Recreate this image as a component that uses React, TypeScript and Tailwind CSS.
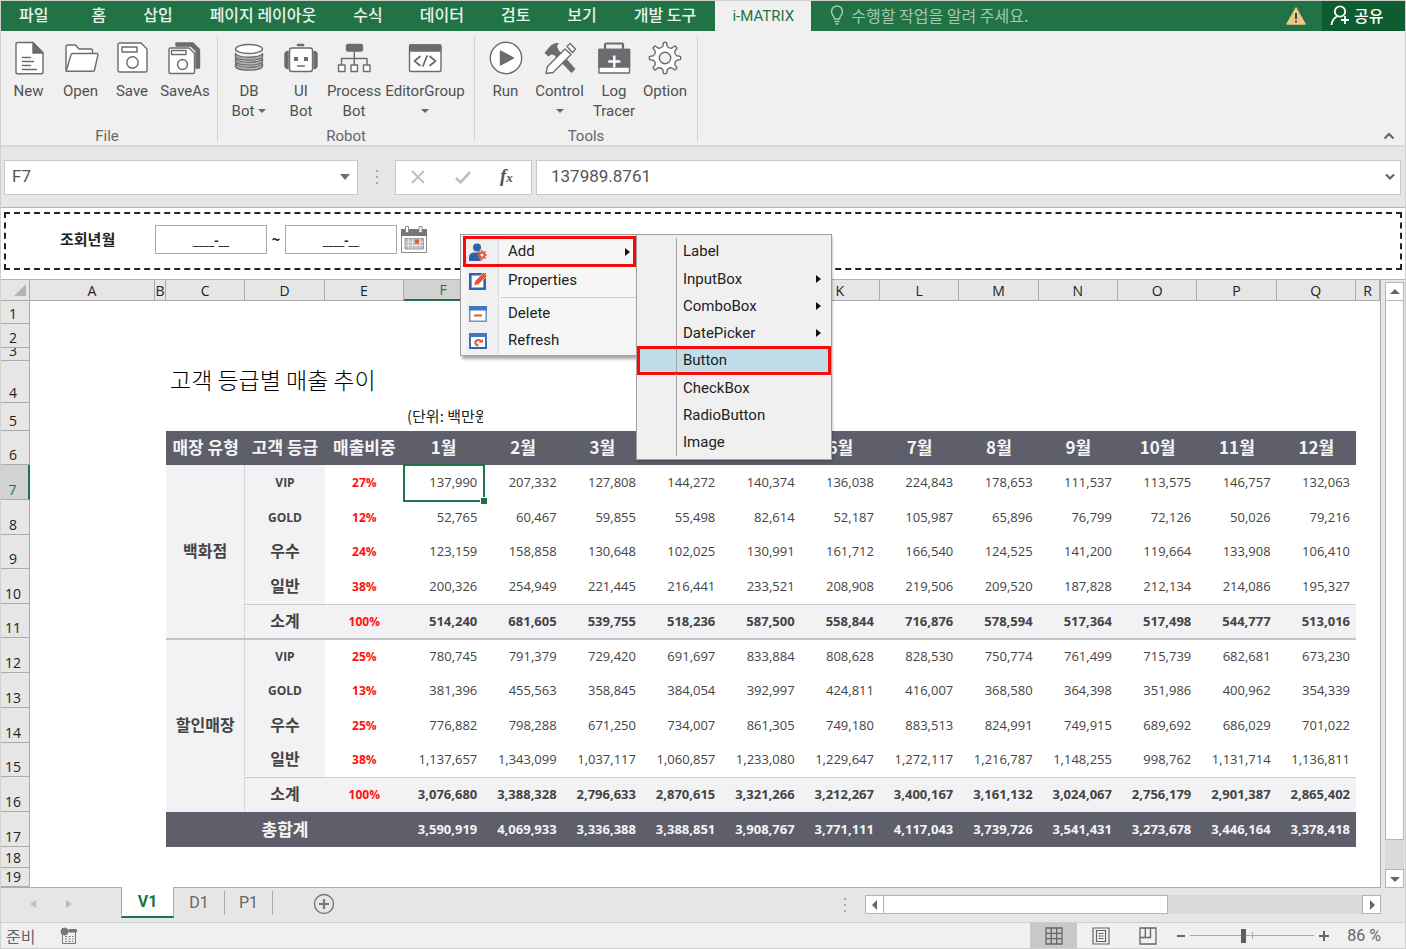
import type { ReactNode } from "react";
import clsx from "clsx";

const INK = "#6b6b70";

function Glyph({ children }: { children: ReactNode }) {
  return (
    <svg
      aria-hidden="true"
      className="h-9 w-9 shrink-0"
      viewBox="0 0 36 36"
      fill="#fff"
      stroke={INK}
      strokeWidth="1.4"
      strokeLinejoin="round"
      strokeLinecap="round"
    >
      {children}
    </svg>
  );
}

function buildGearPath(cx: number, cy: number, outer: number, inner: number, teeth: number) {
  const step = (Math.PI * 2) / teeth;
  const point = (angle: number, r: number) => `${(cx + Math.sin(angle) * r).toFixed(2)} ${(cy - Math.cos(angle) * r).toFixed(2)}`;
  const parts: string[] = [];
  for (let i = 0; i < teeth; i += 1) {
    const a = i * step;
    parts.push(`${i === 0 ? "M" : "L"}${point(a - step * 0.24, inner)}`);
    parts.push(`L${point(a - step * 0.13, outer)}`);
    parts.push(`Q${point(a, outer + 0.6)} ${point(a + step * 0.13, outer)}`);
    parts.push(`L${point(a + step * 0.24, inner)}`);
    parts.push(`Q${point(a + step / 2, inner - 1.6)} ${point(a + step * 0.76, inner)}`);
  }
  return `${parts.join("")}Z`;
}

const NewIcon = () => (
  <Glyph>
    <path d="M6.5 2.5H22L32 13V32a1.8 1.8 0 0 1-1.8 1.8H6.8A1.8 1.8 0 0 1 5 32V4a1.5 1.5 0 0 1 1.500-1.500z" />
    <path d="M22 2.500V13H32z" fill={INK} />
    <path d="M11.500 17.500h8M11.500 21.500h11M11.500 25.500h8M11.500 29.500h14" />
  </Glyph>
);

const OpenIcon = () => (
  <Glyph>
    <path d="M3 31V6.500A1.500 1.500 0 0 1 4.500 5h8l3.500 4h12a1.500 1.500 0 0 1 1.500 1.500V31z" />
    <path d="M9.500 13.500H34a1 1 0 0 1 1 1.200L31.500 30a1.500 1.500 0 0 1-1.500 1.200H4.500a1 1 0 0 1-1-1.200L8 14.700a1.500 1.500 0 0 1 1.500-1.200z" />
  </Glyph>
);

const SaveIcon = () => (
  <Glyph>
    <path d="M5.500 3H27l6 6v21.500a1.500 1.500 0 0 1-1.500 1.500h-26A1.500 1.500 0 0 1 4 30.500v-26A1.500 1.500 0 0 1 5.500 3z" />
    <path d="M8 7h15v5H8z" />
    <circle cx="18.500" cy="22.500" r="5.700" />
  </Glyph>
);

const SaveAsIcon = () => (
  <Glyph>
    <path d="M9 3h17l6.500 6.500V28H29V11l-5-5H9z" fill={INK} />
    <path d="M3.500 8H22l5.500 5.500V32a1.500 1.500 0 0 1-1.500 1.500H3.500A1.500 1.500 0 0 1 2 32V9.500A1.500 1.500 0 0 1 3.500 8z" />
    <path d="M4.500 10.500h14.500v4H4.500z" />
    <circle cx="15.500" cy="24.500" r="5" />
  </Glyph>
);

const DbIcon = () => (
  <Glyph>
    {[25, 20, 15].map((y) => (
      <path key={y} d={`M4.500 ${y - 1.5}v2.500c0 5.500 27 5.500 27 0v-2.500c-3 5-24 5-27 0z`} fill="#b4b4b7" />
    ))}
    <ellipse cx="18" cy="9" rx="13.500" ry="4.500" />
  </Glyph>
);

const BotIcon = () => (
  <Glyph>
    <path d="M14.500 4.500h6v1h-6z" fill={INK} />
    <path d="M5 11.500v17c-2.500 0-3-1.500-3-3v-11c0-1.500.500-3 3-3zM31 11.500v17c2.500 0 3-1.500 3-3v-11c0-1.500-.500-3-3-3z" fill={INK} />
    <rect x="6.500" y="8" width="23" height="23.500" rx="2.500" />
    <path d="M11 17h4v4h-4zM21 17h4v4h-4z" fill={INK} stroke="none" />
    <path d="M14.500 26h7" />
  </Glyph>
);

const ProcessIcon = () => (
  <Glyph>
    <path d="M18.300 11v14M5.500 24.500V18.500H31v6" fill="none" />
    <rect x="10.500" y="4.500" width="16" height="6.500" rx="1.500" fill={INK} />
    <path d="M2.500 25h6.500v6.500H2.500zM15 25h6.500v6.500h-6.500zM27.500 25h6.500v6.500H27.500z" />
  </Glyph>
);

const EditorIcon = () => (
  <Glyph>
    <rect x="2.500" y="5" width="31.500" height="26.500" rx="1.500" />
    <path d="M3 5h30.500v6H3z" fill={INK} />
    <path d="M13 16.500l-5.500 4.500 5.500 4.500M23 16.500l5.500 4.500-5.500 4.500M20 16l-4 10" fill="none" strokeWidth="1.800" />
  </Glyph>
);

const RunIcon = () => (
  <Glyph>
    <circle cx="18" cy="18" r="15.700" />
    <path d="M12.500 11v14L25.500 18z" fill={INK} />
  </Glyph>
);

const ControlIcon = () => (
  <Glyph>
    <path d="M2.500 13L7 7.500C9.500 4 13 2.500 17 3l-2 3 1.500 4L33.500 29l-4 4L12 15l-3-.500-2.500 2z" fill={INK} stroke="none" />
    <path d="M4 33.500l1.500-7L23 9l6 5.500L11 32.500z" />
    <path d="M25 6.500l3-3 5.500 5.500-3 3.500z" />
  </Glyph>
);

const LogIcon = () => (
  <Glyph>
    <path d="M9 10V4.500a1 1 0 0 1 1-1h16a1 1 0 0 1 1 1V10" fill="none" strokeWidth="2.200" />
    <path d="M3 9.500h30.500V33H3z" />
    <path d="M3 9.500h30.500V27H3z" fill={INK} />
    <path d="M18.300 15.500v12M12.300 21.500h12" stroke="#fff" strokeWidth="2.400" strokeLinecap="butt" />
  </Glyph>
);

const OptionIcon = () => (
  <Glyph>
    <path d={buildGearPath(18, 18, 15.5, 11.8, 8)} />
    <circle cx="18" cy="18" r="5.700" fill="#f0f0f0" />
  </Glyph>
);

type RibbonButtonProps = {
  icon: ReactNode;
  lines: string[];
  width: string;
  caret?: "inline" | "below";
};

const Caret = ({ className }: { className?: string }) => (
  <svg aria-hidden="true" viewBox="0 0 8 4" className={clsx("h-1 w-2", className)} fill="#666">
    <path d="M0 0h8L4 4z" />
  </svg>
);

function RibbonButton({ icon, lines, width, caret }: RibbonButtonProps) {
  return (
    <button type="button" className={clsx("flex shrink-0 flex-col items-center text-[15px] leading-5", width)}>
      {icon}
      <span className="mt-[5px]">{lines[0]}</span>
      {lines[1] && (
        <span className="flex items-center gap-1">
          {lines[1]}
          {caret === "inline" && <Caret />}
        </span>
      )}
      {caret === "below" && <Caret className="mt-2" />}
    </button>
  );
}

function RibbonGroup({ label, className, children }: { label: string; className: string; children: ReactNode }) {
  return (
    <section aria-label={label} className={clsx("flex h-[106px] shrink-0 flex-col border-r border-[#d4d4d4]", className)}>
      <div className="flex grow">{children}</div>
      <p className="-mb-1 pr-[5px] text-center text-[15px] leading-5 text-[#666]">{label}</p>
    </section>
  );
}

const tabs = ["홈", "삽입", "페이지 레이아웃", "수식", "데이터", "검토", "보기", "개발 도구"];

function TabBar() {
  return (
    <nav className="flex h-[30px] items-stretch bg-[#217346] text-base leading-6 font-medium text-[#e8f3ec]">
      <button type="button" className="pr-[25px] pb-1 pl-[18px]">파일</button>
      {tabs.map((tab) => (
        <button key={tab} type="button" className="pr-[19px] pb-1 pl-[18px] whitespace-nowrap">{tab}</button>
      ))}
      <button type="button" className="h-[31px] w-24 bg-[#f0f0f0] pb-[2px] font-[Roboto,sans-serif] text-[15px] font-normal text-[#217346]">
        i-MATRIX
      </button>
      <button type="button" className="flex items-center gap-1 px-4 pb-[2px] font-normal text-[#a3c9b2]">
        <svg aria-hidden="true" viewBox="0 0 20 20" className="h-5 w-5" fill="none" stroke="#a3c9b2" strokeWidth="1.500">
          <path d="M7.500 14c0-3-3-4-3-7.500a5.500 5.500 0 0 1 11 0c0 3.500-3 4.500-3 7.500zM7.500 16.500h5M8.500 19h3" />
        </svg>
        수행할 작업을 알려 주세요.
      </button>
      <div className="ml-auto flex items-center pr-4">
        <svg role="img" aria-label="경고" viewBox="0 0 20 18" className="h-[18px] w-5">
          <path d="M10 1L19 17H1z" fill="#efc888" stroke="#efc888" strokeWidth="1.500" strokeLinejoin="round" />
          <path d="M9 6h2v6H9zM9 13.500h2v2H9z" fill="#444" />
        </svg>
      </div>
      <button type="button" className="flex w-[83px] items-center gap-1 bg-[#0e5c2f] pb-[2px] pl-2 text-white">
        <svg aria-hidden="true" viewBox="0 0 20 20" className="h-5 w-5" fill="none" stroke="#fff" strokeWidth="1.800">
          <circle cx="10" cy="6.500" r="5.200" />
          <path d="M1.500 20c.500-5 2.500-7 5.500-8.500M15 11v8M11 15h8" />
        </svg>
        공유
      </button>
    </nav>
  );
}

function Ribbon() {
  return (
    <div className="flex h-[116px] border-b-2 border-[#d9d9d9] bg-[#f0f0f0] pt-[5px] font-[Roboto,sans-serif] text-[#505050]">
      <RibbonGroup label="File" className="w-[217px] pt-1 pl-px">
        <RibbonButton icon={<NewIcon />} lines={["New"]} width="w-[53px]" />
        <RibbonButton icon={<OpenIcon />} lines={["Open"]} width="w-[51px]" />
        <RibbonButton icon={<SaveIcon />} lines={["Save"]} width="w-[52px]" />
        <RibbonButton icon={<SaveAsIcon />} lines={["SaveAs"]} width="w-[54px]" />
      </RibbonGroup>
      <RibbonGroup label="Robot" className="w-[257px] pt-1 pl-[5px]">
        <RibbonButton icon={<DbIcon />} lines={["DB", "Bot"]} width="w-[52px]" caret="inline" />
        <RibbonButton icon={<BotIcon />} lines={["UI", "Bot"]} width="w-[52px]" />
        <RibbonButton icon={<ProcessIcon />} lines={["Process", "Bot"]} width="w-[54px]" />
        <RibbonButton icon={<EditorIcon />} lines={["EditorGroup"]} width="w-[88px]" caret="below" />
      </RibbonGroup>
      <RibbonGroup label="Tools" className="w-[223px] pt-1 pl-[5px]">
        <RibbonButton icon={<RunIcon />} lines={["Run"]} width="w-[51px]" />
        <RibbonButton icon={<ControlIcon />} lines={["Control"]} width="w-[57px]" caret="below" />
        <RibbonButton icon={<LogIcon />} lines={["Log", "Tracer"]} width="w-[52px]" />
        <RibbonButton icon={<OptionIcon />} lines={["Option"]} width="w-[50px]" />
      </RibbonGroup>
      <button type="button" aria-label="리본 접기" className="mr-[10px] mb-[5px] ml-auto self-end">
        <svg viewBox="0 0 12 8" className="h-2 w-3" fill="none" stroke="#666" strokeWidth="2.200">
          <path d="M1.500 6.500L6 2l4.500 4.500" />
        </svg>
      </button>
    </div>
  );
}

const Dots = () => (
  <svg aria-hidden="true" viewBox="0 0 4 14" className="h-[14px] w-1 shrink-0" fill="#a8a8a8">
    <path d="M1 0h2v2H1zM1 6h2v2H1zM1 12h2v2H1z" />
  </svg>
);

function FormulaBar() {
  return (
    <div className="flex h-[61px] items-center border-b border-[#adb4bb] bg-[#e6e6e6] pr-1 pl-[3px] font-[Roboto,sans-serif] text-[17px] text-[#555]">
      <div className="flex h-[35px] w-[354px] shrink-0 items-center border border-[#c8c8c8] bg-white">
        <input aria-label="이름 상자" defaultValue="F7" className="min-w-0 grow pl-[7px] outline-none" />
        <button type="button" aria-label="이름 목록" className="px-[7px]">
          <svg viewBox="0 0 10 6" className="h-[6px] w-[10px]" fill="#707070">
            <path d="M0 0h10L5 6z" />
          </svg>
        </button>
      </div>
      <div className="flex w-[37px] shrink-0 justify-center">
        <Dots />
      </div>
      <div className="flex h-[35px] w-[137px] shrink-0 items-center border border-[#c8c8c8] bg-white pl-[13px]">
        <button type="button" aria-label="취소">
          <svg viewBox="0 0 18 16" className="h-4 w-[18px]" fill="none" stroke="#c0c0c0" strokeWidth="2">
            <path d="M3 2l12 12M15 2L3 14" />
          </svg>
        </button>
        <button type="button" aria-label="입력" className="ml-[27px]">
          <svg viewBox="0 0 18 16" className="h-4 w-[18px]" fill="none" stroke="#c0c0c0" strokeWidth="2.800">
            <path d="M2 9l4.500 4.500L16 3" />
          </svg>
        </button>
        <button type="button" className="ml-7 font-['Liberation_Serif',serif] text-[19px] leading-6 font-bold italic">
          f<span className="text-[13px]">x</span>
        </button>
      </div>
      <div className="ml-1 flex h-[35px] grow items-center border border-[#c8c8c8] bg-white">
        <input aria-label="수식 입력줄" defaultValue="137989.8761" className="min-w-0 grow pl-[14px] outline-none" />
        <button type="button" aria-label="수식 입력줄 확장" className="px-1">
          <svg viewBox="0 0 12 8" className="h-2 w-3" fill="none" stroke="#666" strokeWidth="2.200">
            <path d="M2 1.500L6 5.500l4-4" />
          </svg>
        </button>
      </div>
    </div>
  );
}

function QueryPanel() {
  const field = "h-[29px] w-28 border border-[#a9a9a9] bg-white text-center font-['Open_Sans',sans-serif] text-[13px] font-bold text-[#222]";
  return (
    <div className="h-[71px] bg-white px-[3px] pt-1 pb-[9px]">
      <div className="flex h-[58px] items-center border-2 border-dashed border-[#222] pb-[3px] pl-[54px] text-[15px] font-bold text-[#222]">
        <label htmlFor="from" className="w-[95px]">조회년월</label>
        <input id="from" className={field} defaultValue="____-__" />
        <span className="w-[18px] text-center">~</span>
        <input aria-label="종료 년월" className={field} defaultValue="____-__" />
        <button type="button" aria-label="달력" className="ml-1">
          <svg viewBox="0 0 26 28" className="h-7 w-[26px]">
            <path d="M.500 3.500h25v23H.500z" fill="#fff" stroke="#8a8a8a" />
            <path d="M0 3h26v7H0z" fill="#777" />
            <path d="M4.500.500h3v6h-3zM18 .500h3v6h-3z" fill="#fff" stroke="#8a8a8a" />
            <path d="M4 12.500h18.500v10.500H4z" fill="#bbb" stroke="#999" />
            <path d="M4 16h18.500M4 19.500h18.500M7.700 12.500v10.500M11.400 12.500v10.500M15 12.500v10.500M18.700 12.500v10.500" stroke="#eee" strokeWidth=".8" />
            <path d="M14 13.500h4v4h-4z" fill="#e8562a" />
          </svg>
        </button>
      </div>
    </div>
  );
}

type DataRow = {
  no: number;
  height: string;
  grade: string;
  share: string;
  values: string;
  category?: string;
  subtotal?: boolean;
};

const rows: DataRow[] = [
  { no: 7, height: "h-[35px]", category: "백화점", grade: "VIP", share: "27%", values: "137,990 207,332 127,808 144,272 140,374 136,038 224,843 178,653 111,537 113,575 146,757 132,063" },
  { no: 8, height: "h-[35px]", grade: "GOLD", share: "12%", values: "52,765 60,467 59,855 55,498 82,614 52,187 105,987 65,896 76,799 72,126 50,026 79,216" },
  { no: 9, height: "h-[34px]", grade: "우수", share: "24%", values: "123,159 158,858 130,648 102,025 130,991 161,712 166,540 124,525 141,200 119,664 133,908 106,410" },
  { no: 10, height: "h-[35px]", grade: "일반", share: "38%", values: "200,326 254,949 221,445 216,441 233,521 208,908 219,506 209,520 187,828 212,134 214,086 195,327" },
  { no: 11, height: "h-[34px]", grade: "소계", share: "100%", subtotal: true, values: "514,240 681,605 539,755 518,236 587,500 558,844 716,876 578,594 517,364 517,498 544,777 513,016" },
  { no: 12, height: "h-[35px]", category: "할인매장", grade: "VIP", share: "25%", values: "780,745 791,379 729,420 691,697 833,884 808,628 828,530 750,774 761,499 715,739 682,681 673,230" },
  { no: 13, height: "h-[35px]", grade: "GOLD", share: "13%", values: "381,396 455,563 358,845 384,054 392,997 424,811 416,007 368,580 364,398 351,986 400,962 354,339" },
  { no: 14, height: "h-[35px]", grade: "우수", share: "25%", values: "776,882 798,288 671,250 734,007 861,305 749,180 883,513 824,991 749,915 689,692 686,029 701,022" },
  { no: 15, height: "h-[34px]", grade: "일반", share: "38%", values: "1,137,657 1,343,099 1,037,117 1,060,857 1,233,080 1,229,647 1,272,117 1,216,787 1,148,255 998,762 1,131,714 1,136,811" },
  { no: 16, height: "h-[35px]", grade: "소계", share: "100%", subtotal: true, values: "3,076,680 3,388,328 2,796,633 2,870,615 3,321,266 3,212,267 3,400,167 3,161,132 3,024,067 2,756,179 2,901,387 2,865,402" },
];

const totals = "3,590,919 4,069,933 3,336,388 3,388,851 3,908,767 3,771,111 4,117,043 3,739,726 3,541,431 3,273,678 3,446,164 3,378,418";
const columns = "A B C D E F G H I J K L M N O P Q R".split(" ");
const months = Array.from({ length: 12 }, (_, i) => `${i + 1}월`);

function RowHead({ no, height, active }: { no: number; height: string; active?: boolean }) {
  return (
    <th scope="row" className="p-0 font-['Open_Sans',sans-serif] text-sm leading-[18px] font-medium">
      <div
        className={clsx(
          "flex items-end justify-center overflow-hidden border-b border-b-[#ababab] pr-1",
          height,
          active ? "border-r-2 border-r-[#217346] bg-[#d2d2d2] text-[#217346]" : "border-r border-r-[#ababab] bg-[#e6e6e6] text-[#222]",
        )}
      >
        {no}
      </div>
    </th>
  );
}

function Sheet() {
  const num = "p-0 pr-[6px] pb-[2px] text-right font-['Open_Sans',sans-serif] text-[13px] leading-4";
  return (
    <table className="w-full table-fixed border-separate border-spacing-0 border-r border-b border-[#ababab] bg-white text-[#444]">
      <colgroup>
        <col className="w-[29px]" />
        <col className="w-[125px]" />
        <col className="w-[11px]" />
        {columns.slice(2, 17).map((c) => <col key={c} />)}
        <col className="w-6" />
      </colgroup>
      <thead>
        <tr className="h-[21px] bg-[#e6e6e6] font-['Open_Sans',sans-serif] text-sm leading-5 text-[#222]">
          <th aria-label="모두 선택" className="border-r border-b border-[#ababab] p-0">
            <svg viewBox="0 0 12 12" className="mr-[3px] ml-auto h-3 w-3" fill="#b4b4b4">
              <path d="M12 0v12H0z" />
            </svg>
          </th>
          {columns.map((c) => (
            <th
              key={c}
              scope="col"
              className={clsx(
                "border-r border-r-[#ababab] p-0 text-center leading-[19px] font-medium",
                c === "F" ? "border-b-2 border-b-[#217346] bg-[#d2d2d2] text-[#217346]" : "border-b border-b-[#ababab]",
              )}
            >
              {c}
            </th>
          ))}
        </tr>
      </thead>
      <tbody>
        <tr><RowHead no={1} height="h-[23px]" /></tr>
        <tr><RowHead no={2} height="h-6" /></tr>
        <tr><RowHead no={3} height="h-[13px]" /></tr>
        <tr>
          <RowHead no={4} height="h-[42px]" />
          <td colSpan={2} className="p-0" />
          <td colSpan={4} className="p-0 pb-[6px] pl-1 text-[23px] leading-8 font-light whitespace-nowrap text-black">고객 등급별 매출 추이</td>
        </tr>
        <tr>
          <RowHead no={5} height="h-7" />
          <td colSpan={5} className="p-0" />
          <td className="overflow-hidden p-0 pb-[2px] pl-[3px] text-[15px] leading-6 whitespace-nowrap text-[#222]">(단위: 백만원)</td>
        </tr>
        <tr>
          <RowHead no={6} height="h-[34px]" />
          <td colSpan={2} className="p-0" />
          {["매장 유형", "고객 등급", "매출비중", ...months].map((label) => (
            <th key={label} scope="col" className="bg-[#5f5f6b] p-0 pb-[2px] text-center text-[17px] leading-6 font-bold whitespace-nowrap text-[#f4f4f6]">{label}</th>
          ))}
        </tr>
        {rows.map((row) => {
          const rule = clsx(row.subtotal && "border-t border-t-[#cfcfd3] bg-[#f2f2f5] font-bold", row.no === 12 && "border-t-2 border-t-[#c3c3c8]");
          return (
            <tr key={row.no}>
              <RowHead no={row.no} height={row.height} active={row.no === 7} />
              <td colSpan={2} className="p-0" />
              {row.category && (
                <th
                  scope="rowgroup"
                  rowSpan={5}
                  className={clsx("border-r border-dotted border-r-[#bbbbc2] bg-[#f2f2f5] p-0 pb-1 text-center text-base font-bold", row.no === 12 && "border-t-2 border-t-[#c3c3c8] [border-top-style:solid]")}
                >
                  {row.category}
                </th>
              )}
              <th
                scope="row"
                className={clsx(
                  "bg-[#f2f2f5] p-0 text-center font-bold",
                  /^[A-Z]/.test(row.grade) ? "font-['Open_Sans',sans-serif] text-xs leading-4" : "pb-1 text-base leading-5",
                  rule,
                )}
              >
                {row.grade}
              </th>
              <td className={clsx("p-0 text-center font-['Open_Sans',sans-serif] text-xs leading-4 font-bold text-[#ff1010]", rule)}>{row.share}</td>
              {row.values.split(" ").map((value, i) => {
                const selected = row.no === 7 && i === 0;
                return (
                  <td key={months[i]} className={clsx(num, rule, selected && "relative")}>
                    {value}
                    {selected && (
                      <span className="absolute -top-px -right-[2px] -bottom-[2px] -left-px border-2 border-[#217346]">
                        <span className="absolute -right-1 -bottom-1 h-[7px] w-[7px] border-t border-l border-white bg-[#217346]" />
                      </span>
                    )}
                  </td>
                );
              })}
            </tr>
          );
        })}
        <tr>
          <RowHead no={17} height="h-[35px]" />
          <td colSpan={2} className="p-0" />
          <th scope="row" colSpan={3} className="bg-[#5f5f6b] p-0 pb-[2px] text-center text-[17px] leading-6 font-bold text-[#f4f4f6]">총합계</th>
          {totals.split(" ").map((value) => (
            <td key={value} className={clsx(num, "bg-[#5f5f6b] font-bold text-[#f4f4f6]")}>{value}</td>
          ))}
        </tr>
        <tr><RowHead no={18} height="h-[21px]" /></tr>
        <tr><RowHead no={19} height="h-[19px]" /></tr>
      </tbody>
    </table>
  );
}

const arrows = {
  up: "M0 6h10L5 1z",
  down: "M0 2h10L5 7z",
  left: "M7 -1v10L2 4z",
  right: "M3 -1v10l5-5z",
};

function ScrollButton({ direction, label }: { direction: keyof typeof arrows; label: string }) {
  return (
    <button type="button" aria-label={label} className="flex h-[19px] w-[19px] shrink-0 items-center justify-center border border-[#b4b4b4] bg-white">
      <svg viewBox="0 -1 10 10" className="h-[10px] w-[10px]" fill="#666">
        <path d={arrows[direction]} />
      </svg>
    </button>
  );
}

function VerticalScroll() {
  return (
    <div className="flex w-6 shrink-0 flex-col bg-[#e6e6e6] pt-[2px] pr-px pl-1">
      <div className="flex grow flex-col bg-[#dadada]">
        <ScrollButton direction="up" label="위로" />
        <div className="-mt-px h-[540px] border border-[#b4b4b4] bg-white" />
        <div className="grow" />
        <ScrollButton direction="down" label="아래로" />
      </div>
    </div>
  );
}

function SheetTabs() {
  return (
    <div className="flex h-[34px] items-start bg-[#e6e6e6] font-[Roboto,sans-serif] text-base text-[#666]">
      <button type="button" aria-label="이전 시트" className="mt-3 ml-[29px]">
        <svg viewBox="0 0 6 8" className="h-2 w-[6px]" fill="#bdbdbd"><path d="M6 0v8L0 4z" /></svg>
      </button>
      <button type="button" aria-label="다음 시트" className="mt-3 ml-[30px]">
        <svg viewBox="0 0 6 8" className="h-2 w-[6px]" fill="#bdbdbd"><path d="M0 0v8l6-4z" /></svg>
      </button>
      <button type="button" className="-mt-px ml-[49px] h-[31px] w-[53px] border-x border-b-2 border-x-[#ababab] border-b-[#217346] bg-white font-bold text-[#217346]">V1</button>
      <button type="button" className="mt-[3px] h-6 w-[51px] border-r border-[#ababab]">D1</button>
      <button type="button" className="mt-[3px] h-6 w-[48px] border-r border-[#ababab]">P1</button>
      <button type="button" aria-label="새 시트" className="mt-[5px] ml-10">
        <svg viewBox="0 0 22 22" className="h-[22px] w-[22px]" fill="none" stroke="#777">
          <circle cx="11" cy="11" r="9.500" strokeWidth="1.400" />
          <path d="M11 6v10M6 11h10" strokeWidth="2.200" />
        </svg>
      </button>
      <div className="mt-[7px] mr-6 ml-auto flex w-[538px] items-center gap-[18px]">
        <Dots />
        <div className="flex grow bg-[#dadada]">
          <ScrollButton direction="left" label="왼쪽으로" />
          <div className="-ml-px h-[19px] w-[285px] border border-[#b4b4b4] bg-white" />
          <div className="grow" />
          <ScrollButton direction="right" label="오른쪽으로" />
        </div>
      </div>
    </div>
  );
}

function StatusBar() {
  return (
    <footer className="flex h-[27px] items-center border-y border-[#cfcfcf] bg-[#f0f0f0] text-base leading-6 text-[#666]">
      <span className="pl-[5px]">준비</span>
      <button type="button" aria-label="매크로 기록" className="ml-[25px]">
        <svg viewBox="0 0 18 18" className="h-[18px] w-[18px]" fill="none" stroke="#777">
          <path d="M2.500 8v8.500h13V3.500H8" />
          <path d="M9 2.500h7.500V5H9z" fill="#777" />
          <circle cx="4.500" cy="4.500" r="3.500" fill="#777" />
          <path d="M5 9.500h8.500M5 12h8.500M5 14.500h8.500" strokeDasharray="2 1.500" />
        </svg>
      </button>
      <div className="ml-auto flex h-full items-center">
        <button type="button" aria-label="기본" className="flex h-full w-[47px] items-center justify-center bg-[#c8c8c8]">
          <svg viewBox="0 0 18 18" className="h-[18px] w-[18px]" fill="none" stroke="#666" strokeWidth="1.300">
            <path d="M1 1h16v16H1zM1 6.300h16M1 11.700h16M6.300 1v16M11.700 1v16" />
          </svg>
        </button>
        <button type="button" aria-label="페이지 레이아웃 보기" className="flex w-[47px] justify-center">
          <svg viewBox="0 0 18 18" className="h-[18px] w-[18px]" fill="none" stroke="#666" strokeWidth="1.200">
            <path d="M1 1h16v16H1zM4.500 3.500h9v11h-9zM6.500 6.500h5M6.500 9h5M6.500 11.500h5" />
          </svg>
        </button>
        <button type="button" aria-label="페이지 나누기 미리 보기" className="flex w-[47px] justify-center">
          <svg viewBox="0 0 18 18" className="h-[18px] w-[18px]" fill="none" stroke="#666" strokeWidth="1.300">
            <path d="M1 1h16v16H1zM1 10.500h10.500V1M6.300 1v9.500" />
          </svg>
        </button>
        <button type="button" aria-label="축소" className="ml-[5px]">
          <svg viewBox="0 0 10 10" className="h-[10px] w-[10px]" fill="#666"><path d="M1 4h8v2H1z" /></svg>
        </button>
        <div className="relative ml-1 flex h-[15px] w-[124px] items-center">
          <input
            type="range"
            aria-label="확대/축소"
            min={0}
            max={100}
            defaultValue={43}
            className="h-px w-full appearance-none bg-[#aaa] [&::-webkit-slider-thumb]:h-[14px] [&::-webkit-slider-thumb]:w-[5px] [&::-webkit-slider-thumb]:appearance-none [&::-webkit-slider-thumb]:bg-[#5f5f5f]"
          />
          <span className="absolute top-1 left-[62px] h-[7px] w-px bg-[#aaa]" />
        </div>
        <button type="button" aria-label="확대" className="ml-[5px]">
          <svg viewBox="0 0 10 10" className="h-[10px] w-[10px]" fill="#666"><path d="M0 4h4V0h2v4h4v2H6v4H4V6H0z" /></svg>
        </button>
        <span className="mr-6 ml-[18px] font-[Roboto,sans-serif]">86 %</span>
      </div>
    </footer>
  );
}

const AddIcon = () => (
  <svg aria-hidden="true" viewBox="0 0 18 18" className="h-[18px] w-[18px]">
    <circle cx="8" cy="4.500" r="4" fill="#2f62ad" />
    <path d="M0 18v-3.500C0 11 2.500 9.500 5 9.500h5l2 8.500z" fill="#2f62ad" />
    <path d={buildGearPath(13, 12, 5, 4.2, 8)} fill="#e2573b" />
    <circle cx="13" cy="12" r="1.600" fill="#f0f0f0" />
  </svg>
);

const PropertiesIcon = () => (
  <svg aria-hidden="true" viewBox="0 0 18 18" className="h-[18px] w-[18px]">
    <path d="M1.300 2.300h14.400v14.400H1.300z" fill="#fff" stroke="#2f62ad" strokeWidth="2.600" />
    <path d="M5 13.500l1-4.500L14.500.500 18 4 9.500 12.500z" fill="#e2573b" stroke="#f0f0f0" strokeWidth=".6" />
  </svg>
);

const DeleteIcon = () => (
  <svg aria-hidden="true" viewBox="0 0 18 16" className="h-4 w-[18px]">
    <path d="M.800.800h16.400v14.400H.800z" fill="#fff" stroke="#6c98d0" strokeWidth="1.600" />
    <path d="M0 0h18v4.500H0z" fill="#3f78c0" />
    <path d="M5 8.500h8v2H5z" fill="#e2573b" />
  </svg>
);

const RefreshIcon = () => (
  <svg aria-hidden="true" viewBox="0 0 18 16" className="h-4 w-[18px]">
    <path d="M1 1h16v14H1z" fill="#fff" stroke="#2f62ad" strokeWidth="1.800" />
    <path d="M0 0h18v4H0z" fill="#3f78c0" />
    <path d="M12 8.500A3 2.700 0 1 0 9.500 12.500" fill="none" stroke="#e2573b" strokeWidth="2" />
    <path d="M9.500 9.500h4.500V6z" fill="#e2573b" />
  </svg>
);

const Chevron = () => (
  <svg aria-hidden="true" viewBox="0 0 5 8" className="h-2 w-[5px]" fill="#111">
    <path d="M0 0v8l5-4z" />
  </svg>
);

const contextItems = [
  { label: "Add", icon: <AddIcon /> },
  { label: "Properties", icon: <PropertiesIcon /> },
  { label: "Delete", icon: <DeleteIcon /> },
  { label: "Refresh", icon: <RefreshIcon /> },
];

const controls = ["Label", "InputBox", "ComboBox", "DatePicker", "Button", "CheckBox", "RadioButton", "Image"];
const nested = ["InputBox", "ComboBox", "DatePicker"];

function ContextMenu() {
  return (
    <div className="absolute top-[233px] left-[459px] flex items-start font-[Roboto,sans-serif] text-[15px] text-[#222]">
      <div role="menu" className="w-[176px] border border-r-0 border-[#a0a0a0] bg-[#f6f6f6] py-px pl-[2px] shadow-[2px_3px_3px_rgba(0,0,0,0.35)]">
        {contextItems.map((item) => (
          <div key={item.label}>
            {item.label === "Delete" && (
              <div className="flex h-[6px] items-center">
                <span className="h-full w-9 border-r border-[#dcdcdc] bg-[#f0f0f0]" />
                <span className="ml-[2px] h-px grow bg-[#cfcfcf]" />
              </div>
            )}
            <button
              type="button"
              role="menuitem"
              className={clsx(
                "flex w-full items-center",
                item.label === "Add" ? "h-[31px] border-[3px] border-[#f50d0d]" : "h-[27px] pl-[3px]",
              )}
            >
              <span className="flex h-full w-[33px] shrink-0 items-center border-r border-[#dcdcdc] bg-[#f0f0f0] pl-[3px]">{item.icon}</span>
              <span className="ml-[9px]">{item.label}</span>
              {item.label === "Add" && <span className="mr-[3px] ml-auto"><Chevron /></span>}
            </button>
          </div>
        ))}
      </div>
      <div role="menu" className="grid h-[226px] w-[196px] grid-rows-8 border border-[#a0a0a0] bg-[#f0f0f0] px-px py-[3px] shadow-[1px_2px_2px_rgba(0,0,0,0.2)]">
        {controls.map((label) => {
          const active = label === "Button";
          return (
            <button
              key={label}
              type="button"
              role="menuitem"
              className={clsx("flex items-center", active && "bg-[#c0dde9] outline-3 -outline-offset-2 outline-[#f50d0d]")}
            >
              <span className="h-full w-[39px] border-r border-[#a5a5a5]" />
              <span className="ml-[6px]">{label}</span>
              {nested.includes(label) && <span className="mr-[9px] ml-auto"><Chevron /></span>}
            </button>
          );
        })}
      </div>
    </div>
  );
}

export default function App() {
  return (
    <main className="relative border border-[#d0d0d0] bg-[#f0f0f0] font-['Noto_Sans_CJK_KR',sans-serif]">
      <TabBar />
      <Ribbon />
      <FormulaBar />
      <QueryPanel />
      <div className="flex border-t border-[#adb4bb]">
        <div className="min-w-0 grow">
          <Sheet />
        </div>
        <VerticalScroll />
      </div>
      <SheetTabs />
      <StatusBar />
      <ContextMenu />
    </main>
  );
}
